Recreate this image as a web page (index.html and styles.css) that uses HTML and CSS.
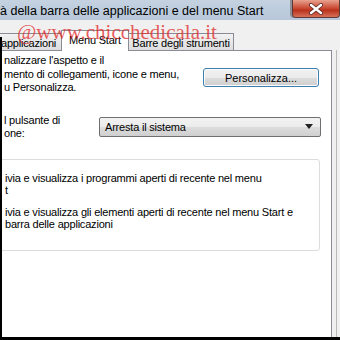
FILE: index.html
```html
<!DOCTYPE html>
<html lang="it">
<head>
  <meta charset="UTF-8">
  <title>Proprietà della barra delle applicazioni e del menu Start</title>
  <link rel="stylesheet" href="styles.css">
</head>
<body>

<div class="titlebar">
  <span class="title">à della barra delle applicazioni e del menu Start</span>
  <div class="close">
    <svg width="16" height="12" viewBox="0 0 16 12">
      <path d="M3 2 L13 10 M13 2 L3 10" stroke="#5a2a2a" stroke-width="4" stroke-linecap="round"/>
      <path d="M3 2 L13 10 M13 2 L3 10" stroke="#fff" stroke-width="2.4" stroke-linecap="round"/>
    </svg>
  </div>
</div>

<div class="dialog">
  <div class="watermark">@www.chicchedicala.it</div>

  <div class="tabs">
    <div class="tab tab-apps">applicazioni</div>
    <div class="tab tab-start selected">Menu Start</div>
    <div class="tab tab-bars">Barre degli strumenti</div>
  </div>

  <div class="body">
    <div class="panel">
      <div class="row custom">
        <div class="desc">
          nalizzare l'aspetto e il<br>
          mento di collegamenti, icone e menu,<br>
          u Personalizza.
        </div>
        <button class="btn">Personalizza...</button>
      </div>

      <div class="row power">
        <div class="desc">
          l pulsante di<br>
          one:
        </div>
        <div class="select">
          <span>Arresta il sistema</span>
          <svg width="8" height="5" viewBox="0 0 8 5"><path d="M0 0 H8 L4 5 Z" fill="#222"/></svg>
        </div>
      </div>

      <div class="group">
        <div class="item">ivia e visualizza i programmi aperti di recente nel menu<br>t</div>
        <div class="item">ivia e visualizza gli elementi aperti di recente nel menu Start e<br>barra delle applicazioni</div>
      </div>
    </div>
    <div class="edge"></div>
  </div>
</div>

</body>
</html>
```

FILE: styles.css
```css
body {
  margin: 0;
  width: 340px;
  height: 340px;
  overflow: hidden;
  background: #000;
  font-family: "Liberation Sans", Arial, sans-serif;
  font-size: 11px;
  color: #000;
}
.titlebar {
  height: 20px;
  display: flex;
  align-items: flex-start;
  background: linear-gradient(#c4d2e1, #b7c7d9);
}
.title {
  flex: 1;
  padding-top: 4px;
  font-size: 12.5px;
  line-height: 14px;
  white-space: nowrap;
  overflow: hidden;
}
.close {
  width: 46px;
  height: 17px;
  margin-left: 2px;
  border: 1px solid #5b3a3a;
  border-top: 0;
  border-radius: 0 0 4px 4px;
  background: linear-gradient(#e8a28f, #c9462f 50%, #b8321c 60%, #d9705a);
  display: flex;
  align-items: center;
  justify-content: center;
  box-shadow: -2px 0 0 #8c8f96;
}
.dialog {
  position: relative;
  height: 317px;
  background: #f0f0f0;
  display: flex;
  flex-direction: column;
  letter-spacing: -0.2px;
}
.dialog::before {
  content: "";
  position: absolute;
  left: 0;
  top: 17px;
  bottom: 0;
  width: 2px;
  background: #000;
  z-index: 5;
}
.watermark {
  position: absolute;
  left: 17px;
  top: 0;
  font-family: "Liberation Serif", serif;
  font-size: 21px;
  letter-spacing: 0;
  color: rgba(225, 40, 40, 0.75);
  z-index: 6;
  white-space: nowrap;
}
.tabs {
  display: flex;
  align-items: flex-end;
  margin-top: 11px;
  height: 20px;
}
.tab {
  height: 18px;
  line-height: 18px;
  text-align: center;
  background: linear-gradient(#f2f2f2, #dcdcdc);
  border: 1px solid #898c95;
  border-bottom: 0;
  box-sizing: border-box;
}
.tab-apps {
  width: 62px;
  border-left: 0;
  text-align: left;
  padding-left: 1px;
}
.tab-start {
  width: 68px;
  margin: 0 -1px;
}
.tab-bars {
  width: 106px;
}
.tab.selected {
  height: 21px;
  line-height: 19px;
  background: #fff;
  position: relative;
  z-index: 2;
}
.body {
  flex: 1;
  display: flex;
  margin-top: -1px;
}
.panel {
  flex: 1;
  background: #fff;
  border: 1px solid #898c95;
  border-left: 0;
  border-bottom: 0;
  padding: 3px 0 0 2px;
  margin-left: 2px;
}
.edge {
  width: 4px;
  border-right: 1px solid #b8b8b8;
  margin-right: 3px;
}
.row {
  display: flex;
  align-items: flex-start;
}
.desc {
  line-height: 13.5px;
  flex: 1;
}
.btn {
  width: 116px;
  height: 19px;
  margin: 14px 12px 0 0;
  padding: 0;
  font: inherit;
  border: 1px solid #3c7fb1;
  border-radius: 3px;
  background: linear-gradient(#f2f2f2, #ebebeb 50%, #dddddd 50%, #cfcfcf);
  box-shadow: inset 0 0 0 1px #fcfcfc;
}
.power {
  margin-top: 19px;
}
.power .desc {
  flex: none;
  width: 95px;
}
.select {
  width: 222px;
  height: 20px;
  margin-top: 3px;
  border: 1px solid #707070;
  border-radius: 2px;
  background: linear-gradient(#f2f2f2, #ebebeb 50%, #dddddd 50%, #cfcfcf);
  display: flex;
  align-items: center;
  justify-content: space-between;
  padding: 0 7px 0 5px;
  box-sizing: border-box;
}
.group {
  margin: 18px 11px 0 -10px;
  height: 78px;
  border: 1px solid #dcdcdc;
  border-radius: 3px;
  padding: 12px 0 0 10px;
  display: flex;
  flex-direction: column;
  gap: 9px;
}
.item {
  line-height: 12.5px;
}
```
